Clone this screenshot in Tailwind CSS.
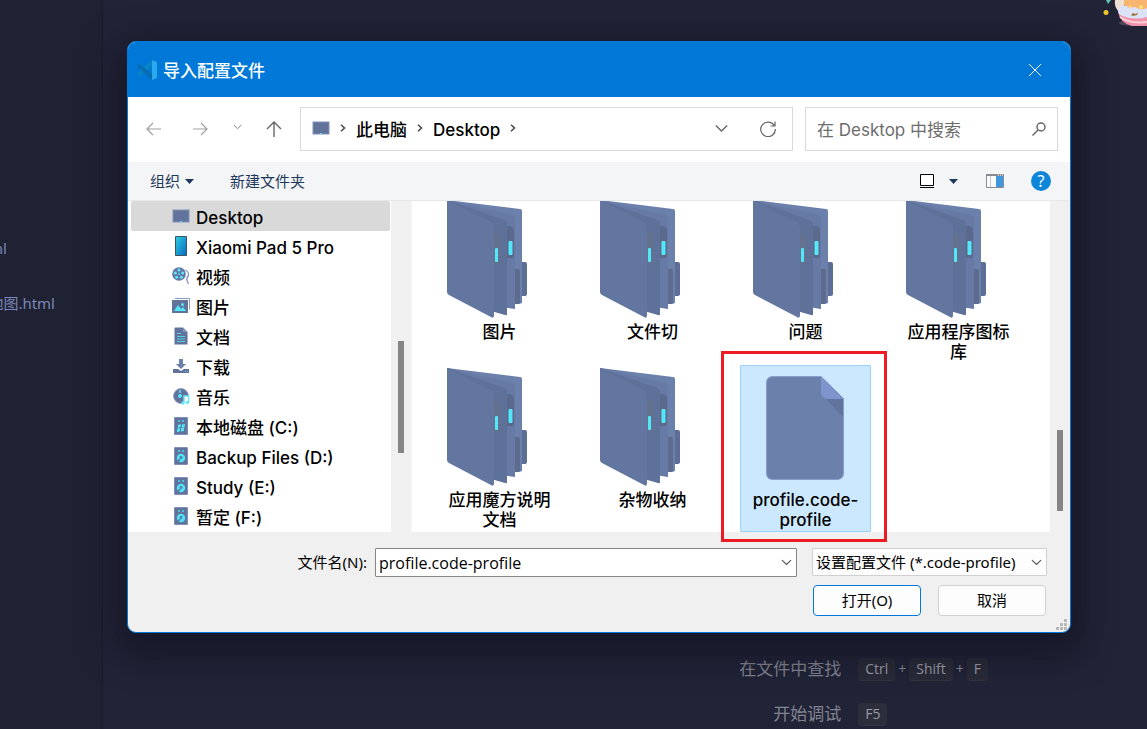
<!DOCTYPE html>
<html lang="zh-CN">
<head>
<meta charset="utf-8">
<meta name="viewport" content="width=device-width, initial-scale=1">
<title>导入配置文件</title>
<script src="https://cdn.jsdelivr.net/npm/@tailwindcss/browser@4"></script>
</head>
<body class="relative flex min-h-screen overflow-hidden bg-[#212337] font-['Noto_Sans','Noto_Sans_CJK_SC',sans-serif] text-[15px]">

<!-- Shared icon shapes -->
<svg class="hidden" aria-hidden="true">
  <symbol id="folder" viewBox="0 0 80 118">
    <path d="M74 62h4q2 0 2 2v30q0 2-2 2h-4z" fill="#5d6e96"/>
    <path d="M0 0 73 9q2 0 2 2v92l-3 1H20z" fill="#6c80ac"/>
    <path d="M0 0 66 15q2 1 2 3v91l-20-3z" fill="#667aa5"/>
    <path d="M68 69h3q2 0 2 2v31q0 2-2 2h-3z" fill="#5d6b8f"/>
    <path d="M58 26h5q4 1 4 5v24q0 4-4 3h-5z" fill="#5b698d"/>
    <path d="M0 0 57 20q3 1 3 4v90q0 2-2 1l-14-4z" fill="#5e7199"/>
    <path d="M46 33h4q3 1 3 4v24q0 4-3 4h-4z" fill="#64718f"/>
    <path d="M0 0 44 22q3 2 3 5v88q0 4-3 2L2 95q-2-1-2-3z" fill="#62769f"/>
    <rect x="48" y="48" width="3" height="14" rx="1" fill="#52e8fa"/>
    <rect x="61.500" y="41" width="4" height="14" rx="1" fill="#52e8fa"/>
  </symbol>
  <symbol id="monitor" viewBox="0 0 18 18">
    <rect x="1" y="3" width="16" height="12" fill="#62739b" stroke="#8291ba"/>
    <path d="M8 14.500h2" stroke="#52dff5"/>
  </symbol>
  <symbol id="disk" viewBox="0 0 18 18">
    <rect x="2.500" y=".5" width="13" height="17" rx=".5" fill="#62739b" stroke="#7e8fbb"/>
    <path d="M6 3h2v2H6zM10 3h2v2h-2z" fill="#43c4dd"/>
    <circle cx="9" cy="11" r="4.200" fill="#4fe3f7"/>
    <circle cx="9" cy="10.500" r="1.400" fill="#5d7ba5"/>
    <path d="m8 12-2 3" stroke="#5d7ba5" stroke-width="1.500"/>
  </symbol>
  <symbol id="chev-down" viewBox="0 0 12 8"><path d="m.8 1.300 5.200 5 5.200-5" fill="none" stroke="currentColor" stroke-width="1.300"/></symbol>
  <symbol id="chev-right" viewBox="0 0 6 8"><path d="m1 .7 3.500 3.300L1 7.300" fill="none" stroke="currentColor" stroke-width="1.500"/></symbol>
</svg>

<!-- Editor side bar -->
<aside class="w-[103px] shrink-0 overflow-hidden border-r border-[#1a1b29] bg-[#1f2233] pt-[236px] text-[15px] text-[#7b86b8]">
  <ul class="flex flex-col gap-[31px]">
    <li class="flex w-[7px] justify-end leading-6 whitespace-nowrap">html</li>
    <li class="flex w-[55px] justify-end leading-6 whitespace-nowrap">地图.html</li>
  </ul>
</aside>

<!-- Editor area with key hints -->
<main class="relative flex flex-1 flex-col justify-end pb-[3px] text-[#828390]">
  <dl class="grid grid-cols-[23fr_9fr] items-center gap-x-[17px] gap-y-[21px] text-[17px] leading-6">
    <dt class="text-right">在文件中查找</dt>
    <dd class="flex items-center gap-[3px] text-sm">
      <kbd class="rounded-sm border-b border-[#343542] bg-[#2a2b38] px-[7px] font-[Open_Sans,sans-serif] leading-[22px] text-[#9a9ba7]">Ctrl</kbd>+
      <kbd class="rounded-sm border-b border-[#343542] bg-[#2a2b38] px-[7px] font-[Open_Sans,sans-serif] leading-[22px] text-[#9a9ba7]">Shift</kbd>+
      <kbd class="rounded-sm border-b border-[#343542] bg-[#2a2b38] px-[7px] font-[Open_Sans,sans-serif] leading-[22px] text-[#9a9ba7]">F</kbd>
    </dd>
    <dt class="text-right">开始调试</dt>
    <dd class="flex text-sm">
      <kbd class="rounded-sm border-b border-[#343542] bg-[#2d2e3c] px-[7px] font-[Open_Sans,sans-serif] leading-[22px] text-[#9a9ba7]">F5</kbd>
    </dd>
  </dl>
  <svg class="absolute top-0 right-0 h-7 w-12" viewBox="0 0 48 28" aria-hidden="true">
    <path d="M7 0h5l-3 4z" fill="#5fc3b3"/>
    <circle cx="7" cy="12.500" r="2.500" fill="#ecc526"/>
    <ellipse cx="34" cy="23" rx="14" ry="3" fill="#4b4658"/>
    <path d="M16 0h9v13l-6-2q-4-5-3-11z" fill="#eee1d3"/>
    <path d="M19 12q2 11 14 14h15V10z" fill="#f293ac"/>
    <path d="M21 17q10 7 27 5" fill="none" stroke="#fbd0d8" stroke-width="2"/>
    <ellipse cx="37" cy="11" rx="18" ry="7.500" fill="#dce2f8"/>
    <path d="M25 0h23v8q-6 3-12-1-6 1-11-2z" fill="#f8b56f"/>
    <circle cx="31" cy="7" r="1.500" fill="#ffd18c"/><circle cx="42" cy="7" r="2" fill="#f9df75"/>
    <path d="m32 15 2-2 3 1 2-2-1 3-4 1z" fill="#9b7936"/>
  </svg>
</main>

<!-- File dialog window -->
<section role="dialog" aria-labelledby="dialog-title" class="absolute top-[41px] right-[76px] left-[127px] overflow-hidden rounded-[9px] border border-[#0078d7] bg-[#f0f0f0] text-black shadow-[0_12px_36px_8px_rgba(10,10,20,0.5)]">

  <header class="flex h-[55px] items-center bg-[#0078d7] pr-[26px] pl-[9px] text-white">
    <svg class="h-5 w-5" viewBox="0 0 20 20" aria-hidden="true">
      <path d="m0 14 2 2L15 6V0z" fill="#0b84c4"/><path d="m0 6 2-2 13 10v6z" fill="#0a6cb0"/>
      <path d="m15 0 5 2v16l-5 2z" fill="#2aa9ee"/>
    </svg>
    <h1 id="dialog-title" class="ml-[6px] flex-1 pt-1 font-[Inter,'Noto_Sans_CJK_SC',sans-serif] text-[17px] font-medium">导入配置文件</h1>
    <button type="button" aria-label="关闭" class="p-[3px]"><svg class="h-3 w-3" viewBox="0 0 12 12" stroke="white"><path d="m0 0 12 12M12 0 0 12"/></svg></button>
  </header>

  <nav aria-label="导航" class="flex h-[65px] items-center bg-white pr-3 pb-[2px] pl-[18px] text-[#666]">
    <button type="button" aria-label="后退" class="text-[#a0a0a0]"><svg class="h-4 w-4" viewBox="0 0 16 16" fill="none" stroke="currentColor" stroke-width="1.200"><path d="M15 8H1.500M7 2 1 8l6 6"/></svg></button>
    <button type="button" aria-label="前进" class="ml-[30px] text-[#a0a0a0]"><svg class="h-4 w-4" viewBox="0 0 16 16" fill="none" stroke="currentColor" stroke-width="1.200"><path d="M1 8h13.500M9 2l6 6-6 6"/></svg></button>
    <button type="button" aria-label="最近位置" class="ml-[25px] pb-[3px] text-[#808080]"><svg class="h-[6px] w-[9px]"><use href="#chev-down"/></svg></button>
    <button type="button" aria-label="上移" class="ml-6"><svg class="h-4 w-4" viewBox="0 0 16 16" fill="none" stroke="currentColor" stroke-width="1.400"><path d="M8 16V1M1 8l7-7 7 7"/></svg></button>
    <div class="ml-[18px] flex h-11 flex-1 items-center border border-[#d9d9d9] pr-4 pl-[11px] font-[Inter,'Noto_Sans_CJK_SC',sans-serif] text-[17px] font-medium text-black">
      <svg class="mb-[2px] h-[18px] w-[18px]" aria-hidden="true"><use href="#monitor"/></svg>
      <svg class="mb-[2px] ml-[10px] h-2 w-[6px] text-[#444]" aria-hidden="true"><use href="#chev-right"/></svg>
      <a href="#" class="ml-[10px] pt-1">此电脑</a>
      <svg class="mb-[2px] ml-[10px] h-2 w-[6px] text-[#444]" aria-hidden="true"><use href="#chev-right"/></svg>
      <a href="#" class="ml-[10px] pt-1">Desktop</a>
      <svg class="mb-[2px] ml-[10px] h-2 w-[6px] text-[#444]" aria-hidden="true"><use href="#chev-right"/></svg>
      <button type="button" aria-label="以前的位置" class="ml-auto text-[#666]"><svg class="h-[9px] w-[13px]"><use href="#chev-down"/></svg></button>
      <button type="button" aria-label="刷新" class="ml-8 text-[#666]"><svg class="h-4 w-4" viewBox="0 0 16 16" fill="none" stroke="currentColor" stroke-width="1.200"><path d="M14.500 5A7.300 7.300 0 1 0 15.300 8M15 .5V5h-4.500"/></svg></button>
    </div>
    <div class="ml-3 flex h-11 w-[253px] items-center border border-[#d9d9d9] pr-[11px] pl-[11px]">
      <input type="search" aria-label="搜索" placeholder="在 Desktop 中搜索" class="min-w-0 flex-1 bg-transparent pt-1 font-[Inter,'Noto_Sans_CJK_SC',sans-serif] text-[17px] outline-none placeholder:text-[#6d6d6d]">
      <svg class="h-[14px] w-[14px]" viewBox="0 0 14 14" fill="none" stroke="#666" stroke-width="1.500" aria-hidden="true"><circle cx="9" cy="5" r="4"/><path d="M6 8 .5 13.500"/></svg>
    </div>
  </nav>

  <div role="toolbar" aria-label="工具" class="flex h-[39px] items-center border-b border-[#e6e7e9] bg-[#f4f5f7] pr-[19px] pl-[22px] text-[#1e395b]">
    <button type="button" class="flex items-center gap-[5px]">组织<svg class="h-[5px] w-[9px]" viewBox="0 0 9 5"><path d="M0 0h9L4.500 5z" fill="#1e395b"/></svg></button>
    <button type="button" class="ml-9">新建文件夹</button>
    <button type="button" aria-label="更改视图" class="ml-auto"><svg class="h-[15px] w-4" viewBox="0 0 16 15"><path d="M1.500.5h13v11h-13zM1 13.500h14" fill="#fff" stroke="#000"/></svg></button>
    <button type="button" aria-label="更多选项" class="ml-[14px]"><svg class="h-[5px] w-[9px]" viewBox="0 0 9 5"><path d="M0 0h9L4.500 5z" fill="#1e395b"/></svg></button>
    <button type="button" aria-label="预览窗格" class="ml-7"><svg class="h-[14px] w-[18px]" viewBox="0 0 18 14"><path d="M.5.5h17v13H.5z" fill="#fbfbfb" stroke="#888b92"/><path d="M0 1h18" stroke="#888b92" stroke-width="2"/><path d="M4.500 2v11" stroke="#c3c8cf"/><path d="M10 2h7v11h-7z" fill="#3f98de"/><path d="M12 1h1m1 0h1m1 0h1" stroke="#fff"/></svg></button>
    <button type="button" aria-label="帮助" class="ml-[27px] flex h-5 w-5 items-center justify-center rounded-full bg-[#0c86d8] text-base leading-5 text-white">?</button>
  </div>

  <div class="relative flex h-[331px]">
    <!-- Folder tree -->
    <div class="flex w-[283px] shrink-0 overflow-hidden bg-white">
      <ul class="flex-1 pl-[3px] font-[Inter,'Noto_Sans_CJK_SC',sans-serif] text-[17px] leading-[30px] font-medium whitespace-nowrap">
        <li class="mr-px flex h-[30px] items-center gap-[6px] rounded-[2px] bg-[#d9d9d9] pl-[41px]"><svg class="h-[18px] w-[18px]"><use href="#monitor"/></svg><span class="pt-1">Desktop</span></li>
        <li class="flex h-[30px] items-center gap-[6px] pl-[41px]"><svg class="h-5 w-[18px]" viewBox="0 0 18 20"><defs><linearGradient id="pad" x2="1" y2="1"><stop stop-color="#2fd0dc"/><stop offset="1" stop-color="#0768c4"/></linearGradient></defs><path d="M3.500.5h11v19h-11z" fill="url(#pad)" stroke="#3c5265"/></svg><span class="pt-1">Xiaomi Pad 5 Pro</span></li>
        <li class="flex h-[30px] items-center gap-[6px] pl-[41px]"><svg class="mb-px h-[18px] w-[18px]" viewBox="0 0 18 18"><circle cx="7" cy="7" r="6.800" fill="#6378a6"/><g fill="#5ce6f7"><circle cx="7" cy="3" r="1.500"/><circle cx="3.300" cy="6" r="1.500"/><circle cx="10.700" cy="6" r="1.500"/><circle cx="4.600" cy="10.300" r="1.500"/><circle cx="9.400" cy="10.300" r="1.500"/><circle cx="7" cy="7" r=".9"/></g><path d="M13.500 3q3.500 2 3 5.500-2.500 3-1.500 5l1.500 3.500" fill="none" stroke="#8798c2" stroke-width="1.300"/></svg><span class="pt-1">视频</span></li>
        <li class="flex h-[30px] items-center gap-[6px] pl-[41px]"><svg class="mb-px h-[18px] w-[18px]" viewBox="0 0 18 18"><path d="M3 1.500h14.500v11" fill="none" stroke="#8c9bc2"/><path d="M0 3h16v13H0z" fill="#62739b"/><path d="m2 14 4-6 3 4 2-2 3 4z" fill="#52e8fa"/><circle cx="10.500" cy="7.500" r="1.500" fill="#52e8fa"/></svg><span class="pt-1">图片</span></li>
        <li class="flex h-[30px] items-center gap-[6px] pl-[41px]"><svg class="mb-px h-[18px] w-[18px]" viewBox="0 0 18 18"><path d="M3 .5h8l4.500 4.500v12.500H2.500V1z" fill="#62739b"/><path d="M11 .5V5h4.500z" fill="#8194c2"/><path d="M5 6.500h4M5 9.500h8M5 12h8M5 14.500h8" stroke="#52cfe4"/></svg><span class="pt-1">文档</span></li>
        <li class="flex h-[30px] items-center gap-[6px] pl-[41px]"><svg class="mb-px h-[18px] w-[18px]" viewBox="0 0 18 18"><path d="M7 2h4v5h3l-5 5-5-5h3z" fill="#6c80ac"/><path d="M1 12h5l3 2 3-2h5v4H1z" fill="#62739b"/><path d="M13 14.500h1m1 0h1" stroke="#52cfe4"/></svg><span class="pt-1">下载</span></li>
        <li class="flex h-[30px] items-center gap-[6px] pl-[41px]"><svg class="mb-px h-[18px] w-[18px]" viewBox="0 0 18 18"><circle cx="9" cy="9" r="7.500" fill="#62739b" stroke="#99a6c9"/><circle cx="8" cy="9" r="2" fill="#52e8fa"/><path d="M8 3v3" stroke="#52cfe4" stroke-width="2"/><path d="M12 16V9h4.500v6" fill="#fff" stroke="#65eafa" stroke-width="1.500"/><circle cx="11" cy="16" r="1.700" fill="#65eafa"/><circle cx="15.500" cy="15.500" r="1.700" fill="#65eafa"/></svg><span class="pt-1">音乐</span></li>
        <li class="flex h-[30px] items-center gap-[6px] pl-[41px]"><svg class="mb-px h-[18px] w-[18px]" viewBox="0 0 18 18"><path d="M2.500.5h13v17h-13z" fill="#62739b" stroke="#7e8fbb"/><path d="M6 3h2v2H6zM10 3h2v2h-2z" fill="#43c4dd"/><path d="m6 8 3-1-.5 3.300-3 .5zM10 7.500l3-.5-.5 3-3 .5zM5.300 11.500l3-.5-.5 3.500-3 .5zM9.300 11l3-.5-.5 3.500-3 .5z" fill="#52e8fa"/></svg><span class="pt-1">本地磁盘 (C:)</span></li>
        <li class="flex h-[30px] items-center gap-[6px] pl-[41px]"><svg class="mb-px h-[18px] w-[18px]"><use href="#disk"/></svg><span class="pt-1">Backup Files (D:)</span></li>
        <li class="flex h-[30px] items-center gap-[6px] pl-[41px]"><svg class="mb-px h-[18px] w-[18px]"><use href="#disk"/></svg><span class="pt-1">Study (E:)</span></li>
        <li class="flex h-[30px] items-center gap-[6px] pl-[41px]"><svg class="mb-px h-[18px] w-[18px]"><use href="#disk"/></svg><span class="pt-1">暂定 (F:)</span></li>
      </ul>
      <div class="flex w-5 justify-center bg-[#f0f0f0] pt-[140px]"><div class="h-28 w-[6px] bg-[#858585]"></div></div>
    </div>

    <!-- Files -->
    <div class="flex flex-1 overflow-hidden border-l-2 border-[#fafafa] bg-white">
      <ul class="-mt-1 grid flex-1 grid-cols-[repeat(auto-fill,131px)] content-start gap-x-[22px] gap-y-px pl-[21px] text-center font-[Inter,'Noto_Sans_CJK_SC',sans-serif] text-[17px] leading-5 font-medium">
        <li class="h-[167px] pt-[3px]"><svg class="ml-[13px] h-[118px] w-20"><use href="#folder"/></svg><p class="px-3 pt-1">图片</p></li>
        <li class="h-[167px] pt-[3px]"><svg class="ml-[13px] h-[118px] w-20"><use href="#folder"/></svg><p class="px-3 pt-1">文件切</p></li>
        <li class="h-[167px] pt-[3px]"><svg class="ml-[13px] h-[118px] w-20"><use href="#folder"/></svg><p class="px-3 pt-1">问题</p></li>
        <li class="h-[167px] pt-[3px]"><svg class="ml-[13px] h-[118px] w-20"><use href="#folder"/></svg><p class="px-3 pt-1">应用程序图标库</p></li>
        <li class="h-[167px] pt-[3px]"><svg class="ml-[13px] h-[118px] w-20"><use href="#folder"/></svg><p class="px-3 pt-1">应用魔方说明文档</p></li>
        <li class="h-[167px] pt-[3px]"><svg class="ml-[13px] h-[118px] w-20"><use href="#folder"/></svg><p class="px-3 pt-1">杂物收纳</p></li>
        <li aria-selected="true" class="h-[167px] rounded-[1px] border border-[#99d1ff] bg-[#cce8ff] pt-[10px]">
          <svg class="ml-[25px] h-[104px] w-[78px]" viewBox="0 0 78 104"><path d="M7 .5h48l22.500 22V97q0 6.500-7 6.500H7q-6.500 0-6.500-6.500V7Q.5.500 7 .5z" fill="#6c80ac" stroke="#8a9dca"/><path d="m59 22 18 19V22z" fill="#61749d"/><path d="m55 1 22 22H62q-7 0-7-7z" fill="#7d94cc"/></svg>
          <p class="pt-[10px]">profile.code-<br>profile</p>
        </li>
      </ul>
      <div class="flex w-5 justify-center bg-[#f0f0f0] pt-[229px]"><div class="h-[81px] w-[6px] bg-[#858585]"></div></div>
    </div>

    <!-- Highlight frame around the selected file -->
    <div class="pointer-events-none absolute top-[150px] left-[593px] z-10 h-[191px] w-[166px] border-3 border-[#ed1c24]"></div>
  </div>

  <form class="pt-4 pr-[23px] pb-4" onsubmit="return false">
    <div class="flex items-start">
      <label for="filename" class="w-[239px] shrink-0 text-right leading-7">文件名(N):</label>
      <div class="ml-2 flex h-[29px] flex-1 items-center rounded-[1px] border border-[#858585] bg-white pr-1 pl-[3px]">
        <input id="filename" type="text" value="profile.code-profile" class="min-w-0 flex-1 bg-transparent font-[Open_Sans,sans-serif] text-base leading-6 outline-none">
        <button type="button" aria-label="历史文件名" class="text-[#555]"><svg class="h-[7px] w-[11px]"><use href="#chev-down"/></svg></button>
      </div>
      <div class="relative ml-[15px] w-[235px]">
        <select aria-label="文件类型" class="h-7 w-full appearance-none rounded-[1px] border border-[#d0d0d0] bg-[#fdfdfd] pl-[3px] text-[15px]"><option>设置配置文件 (*.code-profile)</option></select>
        <svg class="pointer-events-none absolute top-[11px] right-[5px] h-[7px] w-[11px] text-[#555]"><use href="#chev-down"/></svg>
      </div>
    </div>
    <div class="mt-2 flex justify-end gap-[17px] pr-px">
      <button type="submit" class="h-[31px] w-[108px] rounded-[4px] border border-[#0078d7] bg-[#fdfdfd]">打开(O)</button>
      <button type="button" class="h-[31px] w-[108px] rounded-[4px] border border-[#d0d0d0] bg-[#fdfdfd]">取消</button>
    </div>
  </form>
  <svg class="absolute right-[3px] bottom-[2px] h-[11px] w-[11px]" viewBox="0 0 11 11" fill="#b8b8b8" aria-hidden="true"><path d="M8 0h3v3H8zM4 4h3v3H4zM8 4h3v3H8zM0 8h3v3H0zM4 8h3v3H4zM8 8h3v3H8z"/></svg>
</section>
</body>
</html>
